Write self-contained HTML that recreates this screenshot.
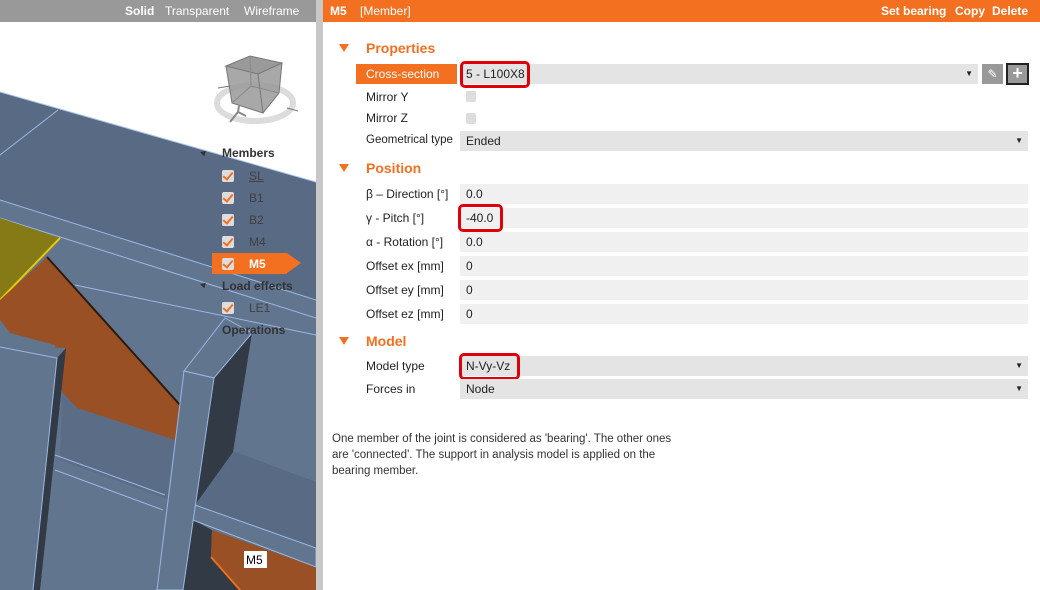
<!DOCTYPE html>
<html><head><meta charset="utf-8"><style>
*{margin:0;padding:0;box-sizing:border-box}
body{width:1040px;height:590px;overflow:hidden;font-family:"Liberation Sans",sans-serif;font-size:12px;background:#fff;position:relative;color:#222}
.abs{position:absolute}
.lbl{position:absolute;left:366px;font-size:12px;color:#222}
.inp{position:absolute;left:460px;width:568px;height:20px;padding-left:6px;line-height:20px;font-size:12px}
.dd{background:#e4e4e4}
.tx{background:#f0f0f0}
.arr{position:absolute;right:5px;top:0;font-size:8px}
.sec{position:absolute;left:366px;font-weight:bold;font-size:14px;color:#f37021}
.tri{position:absolute;left:339px;width:0;height:0;border-left:5px solid transparent;border-right:5px solid transparent;border-top:8px solid #f37021}
.red{position:absolute;border:3px solid #e0000a;border-radius:5px}
.mem{position:absolute;left:249px;font-size:12px;color:#404040}
.cb{position:absolute;left:222px;width:12px;height:12px;background:#ddd;border-radius:2px}
.cb:after{content:"";position:absolute;left:3px;top:0px;width:4px;height:8px;border-right:2px solid #f37021;border-bottom:2px solid #f37021;transform:rotate(40deg)}
</style></head><body>
<svg class="abs" style="left:0;top:0" width="316" height="590" viewBox="0 0 316 590">
<rect width="316" height="590" fill="#fff"/>
<polygon points="0,92 316,182 316,590 0,590" fill="#586a84"/>
<polygon points="0,200 316,300 316,590 0,590" fill="#62758f"/>
<line x1="0" y1="92" x2="316" y2="182" stroke="#a9c4ea" stroke-width="1"/>
<line x1="0" y1="155" x2="58" y2="110" stroke="#9ab8e4"/>
<line x1="0" y1="200" x2="316" y2="300" stroke="#9ab8e4"/>
<line x1="0" y1="218" x2="316" y2="318" stroke="#9ab8e4"/>
<line x1="75" y1="285" x2="316" y2="335" stroke="#9ab8e4"/>
<polygon points="0,218 60,238 0,300" fill="#857a15"/>
<line x1="60" y1="238" x2="0" y2="300" stroke="#e8c800" stroke-width="2"/>
<polygon points="0,300 47,257 180,405 175,440 77,408 62,392 55,345 10,333 0,320" fill="#9a5025"/>
<line x1="47" y1="257" x2="180" y2="405" stroke="#2a1a10" stroke-width="2"/>
<polygon points="62,392 77,408 175,440 170,500 60,460" fill="#5a6c86"/>
<polygon points="233,451 316,482 316,548 195,505" fill="#586a84"/>
<polygon points="214,378 252,333 233,452 195,505" fill="#323a46"/>
<polygon points="193,520 212,530 211,557 240,590 180,590" fill="#323a46"/>
<polygon points="212,530 316,567 316,590 240,590 211,557" fill="#9a5025"/>
<line x1="211" y1="557" x2="240" y2="590" stroke="#e87020" stroke-width="2"/>
<polygon points="195,505 316,548 316,567 193,520" fill="#62758f" stroke="#9ab8e4"/>
<polygon points="0,345 66,348 57,358 33,590 0,590" fill="#62758f"/>
<polygon points="57,358 66,348 40,590 33,590" fill="#323a46"/>
<polyline points="0,347 57,358 33,590" fill="none" stroke="#9ab8e4"/>
<line x1="55" y1="455" x2="165" y2="495" stroke="#9ab8e4"/>
<line x1="55" y1="470" x2="163" y2="510" stroke="#9ab8e4"/>
<polygon points="184,371 225,318 252,333 214,378" fill="#62758f" stroke="#9ab8e4"/>
<polygon points="184,371 214,378 183,590 157,590" fill="#62758f" stroke="#9ab8e4"/>
<ellipse cx="255" cy="103" rx="38" ry="18" fill="none" stroke="#dcdcdc" stroke-width="6"/>
<polygon points="226,66 250,56 282,63 279,93 263,113 232,103" fill="#999" fill-opacity="0.85"/>
<polygon points="226,66 250,56 282,63 258,74" fill="#9a9a9a" stroke="#777"/>
<polyline points="258,74 263,113" fill="none" stroke="#777"/>
<polyline points="226,66 232,103 263,113 279,93 282,63" fill="none" stroke="#777"/>
<polyline points="250,56 251,86 232,103" fill="none" stroke="#888"/>
<line x1="251" y1="86" x2="279" y2="93" stroke="#888"/>
<line x1="218" y1="88" x2="230" y2="86" stroke="#777"/>
<line x1="287" y1="108" x2="298" y2="111" stroke="#777"/>
<line x1="230" y1="122" x2="238" y2="112" stroke="#888" stroke-width="2"/>
<line x1="238" y1="112" x2="246" y2="116" stroke="#888" stroke-width="2"/>
<line x1="238" y1="112" x2="239" y2="106" stroke="#888" stroke-width="2"/>
<rect x="244" y="551" width="23" height="17" fill="#fff"/>
<text x="246" y="564" font-size="12" font-family="Liberation Sans">M5</text>
</svg>
<div class="abs" style="left:0;top:0;width:316px;height:22px;background:#999"></div>
<div class="abs" style="left:125px;top:4px;color:#fff;font-weight:bold">Solid</div>
<div class="abs" style="left:165px;top:4px;color:#fff">Transparent</div>
<div class="abs" style="left:244px;top:4px;color:#fff">Wireframe</div>
<div class="abs" style="left:201px;top:150px;border-left:3px solid transparent;border-right:3px solid transparent;border-bottom:5px solid #333;transform:rotate(45deg)"></div>
<div class="abs" style="left:222px;top:146px;font-weight:bold;color:#333">Members</div>
<div class="cb" style="top:170px"></div><div class="mem" style="top:169px;text-decoration:underline">SL</div>
<div class="cb" style="top:192px"></div><div class="mem" style="top:191px">B1</div>
<div class="cb" style="top:214px"></div><div class="mem" style="top:213px">B2</div>
<div class="cb" style="top:236px"></div><div class="mem" style="top:235px">M4</div>
<div class="abs" style="left:212px;top:253px;width:75px;height:21px;background:#f37021"></div>
<div class="abs" style="left:287px;top:253px;border-top:10.5px solid transparent;border-bottom:10.5px solid transparent;border-left:14px solid #f37021"></div>
<div class="cb" style="top:258px"></div><div class="mem" style="top:257px;color:#fff;font-weight:bold">M5</div>
<div class="abs" style="left:201px;top:282px;border-left:3px solid transparent;border-right:3px solid transparent;border-bottom:5px solid #333;transform:rotate(45deg)"></div>
<div class="abs" style="left:222px;top:279px;font-weight:bold;color:#333">Load effects</div>
<div class="cb" style="top:302px"></div><div class="mem" style="top:301px">LE1</div>
<div class="abs" style="left:222px;top:323px;font-weight:bold;color:#333">Operations</div>
<div class="abs" style="left:316px;top:0;width:7px;height:590px;background:#c8c8c8"></div>
<div class="abs" style="left:323px;top:0;width:717px;height:22px;background:#f37021"></div>
<div class="abs" style="left:330px;top:4px;color:#fff;font-weight:bold">M5</div>
<div class="abs" style="left:360px;top:4px;color:#fff">[Member]</div>
<div class="abs" style="left:881px;top:4px;color:#fff;font-weight:bold">Set bearing</div>
<div class="abs" style="left:955px;top:4px;color:#fff;font-weight:bold">Copy</div>
<div class="abs" style="left:992px;top:4px;color:#fff;font-weight:bold">Delete</div>
<div class="tri" style="top:44px"></div><div class="sec" style="top:40px">Properties</div>
<div class="abs" style="left:356px;top:64px;width:101px;height:20px;background:#f37021"></div>
<div class="lbl" style="top:67px;color:#fff">Cross-section</div>
<div class="inp dd" style="top:64px;width:518px">5 - L100X8<span class="arr">▼</span></div>
<div class="abs" style="left:982px;top:64px;width:21px;height:20px;background:#999;color:#fff;text-align:center;line-height:20px">✎</div>
<div class="abs" style="left:1006px;top:63px;width:23px;height:22px;background:#999;border:2px solid #222;color:#fff;text-align:center;font-weight:bold;font-size:18px;line-height:17px">+</div>
<div class="red" style="left:460px;top:61px;width:70px;height:27px"></div>
<div class="lbl" style="top:90px">Mirror Y</div>
<div class="abs" style="left:466px;top:91px;width:10px;height:11px;background:#ddd;border-radius:2px"></div>
<div class="lbl" style="top:111px">Mirror Z</div>
<div class="abs" style="left:466px;top:113px;width:10px;height:11px;background:#ddd;border-radius:2px"></div>
<div class="lbl" style="top:134px;font-size:11.5px">Geometrical type</div>
<div class="inp dd" style="top:131px">Ended<span class="arr">▼</span></div>
<div class="tri" style="top:164px"></div><div class="sec" style="top:160px">Position</div>
<div class="lbl" style="top:187px">β – Direction [°]</div><div class="inp tx" style="top:184px">0.0</div>
<div class="lbl" style="top:211px">γ - Pitch [°]</div><div class="inp tx" style="top:208px">-40.0</div>
<div class="red" style="left:458px;top:204px;width:45px;height:28px"></div>
<div class="lbl" style="top:235px">α - Rotation [°]</div><div class="inp tx" style="top:232px">0.0</div>
<div class="lbl" style="top:259px">Offset ex [mm]</div><div class="inp tx" style="top:256px">0</div>
<div class="lbl" style="top:283px">Offset ey [mm]</div><div class="inp tx" style="top:280px">0</div>
<div class="lbl" style="top:307px">Offset ez [mm]</div><div class="inp tx" style="top:304px">0</div>
<div class="tri" style="top:337px"></div><div class="sec" style="top:333px">Model</div>
<div class="lbl" style="top:359px">Model type</div><div class="inp dd" style="top:356px">N-Vy-Vz<span class="arr">▼</span></div>
<div class="red" style="left:459px;top:353px;width:61px;height:27px"></div>
<div class="lbl" style="top:382px">Forces in</div><div class="inp dd" style="top:379px">Node<span class="arr">▼</span></div>
<div class="abs" style="left:332px;top:431px;width:345px;line-height:16px;color:#333;font-size:11.5px">One member of the joint is considered as 'bearing'. The other ones are 'connected'. The support in analysis model is applied on the bearing member.</div>
</body></html>
